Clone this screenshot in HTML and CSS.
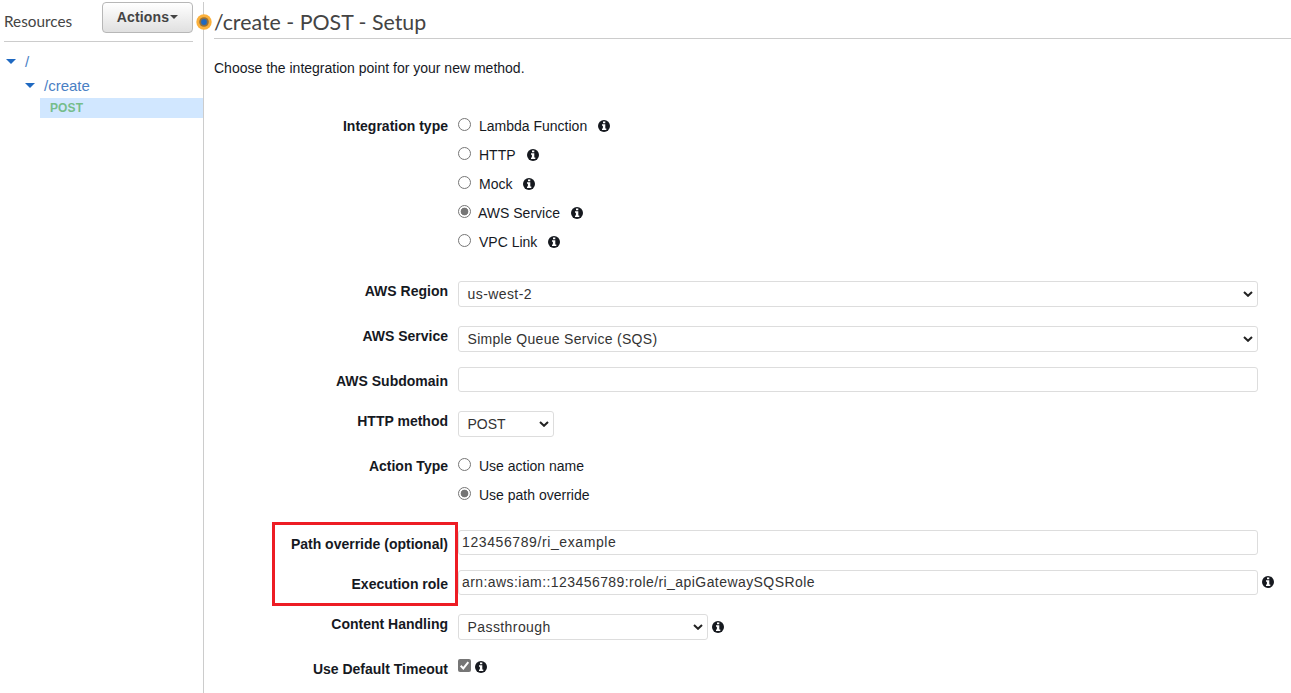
FILE: index.html
```html
<!DOCTYPE html>
<html lang="en">
<head>
<meta charset="utf-8">
<title>/create - POST - Setup</title>
<link rel="stylesheet" href="styles.css">
</head>
<body>
<svg class="sprite" width="0" height="0">
  <symbol id="info" viewBox="0 0 12 12"><circle cx="6" cy="6" r="6" fill="#16191f"/><path d="M5 1.500h2.300v1.800H5zM4 4.200h3.300v4.300H8.300v1.600H4V8.500h.9V5.800H4z" fill="#fff"/></symbol>
  <symbol id="chev" viewBox="0 0 10 6"><path d="M1 1l4 3.800L9 1" fill="none" stroke="#222" stroke-width="2"/></symbol>
</svg>
<div class="app">
  <aside class="sidebar">
    <header class="side-head">
      <span class="side-title">Resources</span>
      <button class="actions"><span>Actions</span><i class="caret"></i></button>
    </header>
    <nav class="tree">
      <div class="node root"><i class="tri"></i><span>/</span></div>
      <div class="node child"><i class="tri"></i><span>/create</span></div>
      <div class="method">POST</div>
    </nav>
    <svg class="handle" viewBox="0 0 16 16"><circle cx="8" cy="8" r="7.700" fill="#fbb03b"/><circle cx="8" cy="8" r="4.800" fill="#94703c"/><circle cx="8" cy="8" r="2.900" fill="#1f69c1"/></svg>
  </aside>
  <main class="main">
    <h1 class="title">/create - POST - Setup</h1>
    <p class="intro">Choose the integration point for your new method.</p>
    <form class="form">
      <div class="row type-row">
        <div class="label">Integration type</div>
        <div class="options">
          <label class="option"><input type="radio" class="radio" name="type"><span>Lambda Function</span><svg class="info"><use href="#info"/></svg></label>
          <label class="option"><input type="radio" class="radio" name="type"><span>HTTP</span><svg class="info"><use href="#info"/></svg></label>
          <label class="option"><input type="radio" class="radio" name="type"><span>Mock</span><svg class="info"><use href="#info"/></svg></label>
          <label class="option tight"><input type="radio" class="radio" name="type" checked><span>AWS Service</span><svg class="info"><use href="#info"/></svg></label>
          <label class="option"><input type="radio" class="radio" name="type"><span>VPC Link</span><svg class="info"><use href="#info"/></svg></label>
        </div>
      </div>
      <div class="row region-row">
        <div class="label">AWS Region</div>
        <div class="select"><span>us-west-2</span><svg class="chev"><use href="#chev"/></svg></div>
      </div>
      <div class="row service-row">
        <div class="label">AWS Service</div>
        <div class="select"><span>Simple Queue Service (SQS)</span><svg class="chev"><use href="#chev"/></svg></div>
      </div>
      <div class="row subdomain-row">
        <div class="label low">AWS Subdomain</div>
        <input class="input" type="text">
      </div>
      <div class="row method-row">
        <div class="label">HTTP method</div>
        <div class="select small"><span>POST</span><svg class="chev"><use href="#chev"/></svg></div>
      </div>
      <div class="row action-row">
        <div class="label">Action Type</div>
        <div class="options">
          <label class="option"><input type="radio" class="radio" name="action"><span>Use action name</span></label>
          <label class="option"><input type="radio" class="radio" name="action" checked><span>Use path override</span></label>
        </div>
      </div>
      <div class="marked">
        <div class="row path-row">
          <div class="label low">Path override (optional)</div>
          <input class="input" type="text" value="123456789/ri_example">
        </div>
        <div class="row role-row">
          <div class="label low">Execution role</div>
          <input class="input" type="text" value="arn:aws:iam::123456789:role/ri_apiGatewaySQSRole">
          <svg class="info"><use href="#info"/></svg>
        </div>
        <i class="marker"></i>
      </div>
      <div class="row content-row">
        <div class="label">Content Handling</div>
        <div class="select medium"><span>Passthrough</span><svg class="chev"><use href="#chev"/></svg></div>
        <svg class="info"><use href="#info"/></svg>
      </div>
      <div class="row timeout-row">
        <div class="label">Use Default Timeout</div>
        <svg class="check" viewBox="0 0 13 13"><rect width="13" height="13" rx="2" fill="#767676"/><path d="M2.700 6.800l2.600 2.600 5-6.200" fill="none" stroke="#fff" stroke-width="2"/></svg>
        <svg class="info"><use href="#info"/></svg>
      </div>
    </form>
  </main>
</div>
</body>
</html>
```
FILE: styles.css
```css
* { box-sizing: border-box; }
body { margin: 0; background: #fff; color: #16191f; font: 14px/20px "Liberation Sans", Arial, sans-serif; overflow: hidden; }
.sprite { position: absolute; }
.app { display: flex; height: 693px; }

.sidebar { position: relative; width: 203px; flex: none; }
.sidebar::after { content: ""; position: absolute; left: 203px; top: 2px; bottom: 0; width: 1px; background: #ccc; }
.side-head { display: flex; justify-content: space-between; height: 42px; margin: 0 10px 0 4px; border-bottom: 1px solid #ccc; }
.side-title { padding-top: 11px; font: 15.3px/20px Lato, sans-serif; color: #444; }
.actions { display: flex; align-items: center; justify-content: center; width: 91px; height: 31px; margin: 2px 0 0; padding: 0 0 1px; border: 1px solid #b7b7b7; border-radius: 4px; background: linear-gradient(#fff, #e0e0e0); color: #444; font: bold 14px/20px "Liberation Sans", Arial, sans-serif; letter-spacing: .15px; }
.caret { margin-left: 1px; border: 4px solid transparent; border-top-color: #444; border-bottom: 0; }
.tree { padding-top: 8px; color: #4a80c4; }
.node { display: flex; align-items: center; height: 24px; font-size: 15px; }
.root { padding-left: 6px; }
.child { padding-left: 25px; }
.tri { margin: 0 9px 1px 0; border: 5px solid transparent; border-top: 5px solid #1f69c1; border-bottom: 0; }
.method { height: 20px; margin-left: 40px; padding-left: 10px; background: #d1e7ff; color: #76bd8b; font-weight: bold; font-size: 12px; letter-spacing: .1px; }
.handle { position: absolute; z-index: 2; left: 195.500px; top: 13.500px; width: 16px; height: 16px; }

.main { flex: 1; min-width: 0; padding-left: 11px; }
.title { height: 39px; margin: 0; padding-top: 8px; border-bottom: 1px solid #ccc; font: 400 21.35px/28px Lato, sans-serif; color: #444; }
.intro { margin: 19px 0 34px; }

.row { display: grid; grid-template-columns: 234px 800px auto; column-gap: 10px; align-items: start; justify-content: start; }
.label { text-align: right; font-weight: bold; white-space: nowrap; }
.low { padding-top: 4px; }
.options { margin-top: -1px; }
.option { display: flex; align-items: center; height: 29px; }
.radio { appearance: none; width: 13px; height: 13px; margin: 0 8px 3px 0; border: 1px solid #767676; border-radius: 50%; background: #fff; flex: none; }
.tight .radio { margin-right: 7px; }
.radio:checked { background: radial-gradient(circle, #767676 0 3.500px, #fff 4.200px); }
.info { display: block; width: 12px; height: 12px; }
.option .info { margin-left: 11px; }
.type-row { height: 145px; }
.type-row .label, .action-row .label { padding-top: 4px; }
.select, .input { width: 100%; margin: 0; border: 1px solid #ddd; border-radius: 3px; background: #fff; color: #333; font: 14px/20px "Liberation Sans", Arial, sans-serif; letter-spacing: .43px; }
.select { display: flex; align-items: center; justify-content: space-between; height: 26px; padding: 0 4px 0 8.500px; letter-spacing: .3px; }
.input { height: 25px; padding: 0 3px 1px; }
.path-row .input { letter-spacing: .6px; }
.chev { width: 10px; height: 6px; }
.region-row { margin-top: 24px; }
.region-row .select, .content-row .select { letter-spacing: .42px; }
.service-row { margin-top: 19px; }
.subdomain-row { margin-top: 15px; }
.method-row { margin-top: 19px; }
.row .small { width: 96px; letter-spacing: 0; }
.action-row { margin-top: 15px; }
.marked { position: relative; margin-top: 21px; }
.role-row { margin-top: 15px; grid-template-columns: 234px 800px 12px; }
.role-row .info { margin: 6px 0 0 -6px; }
.marker { position: absolute; left: 58px; top: -8px; width: 186px; height: 84px; border: 3px solid #ed1c24; }
.content-row { margin-top: 19px; grid-template-columns: 234px 250px 12px; }
.content-row .info { margin: 7px 0 0 -6px; }
.timeout-row { margin-top: 19px; grid-template-columns: 234px 13px 12px; }
.check { width: 13px; height: 13px; }
.timeout-row .info { margin: 2px 0 0 -6px; }
```
